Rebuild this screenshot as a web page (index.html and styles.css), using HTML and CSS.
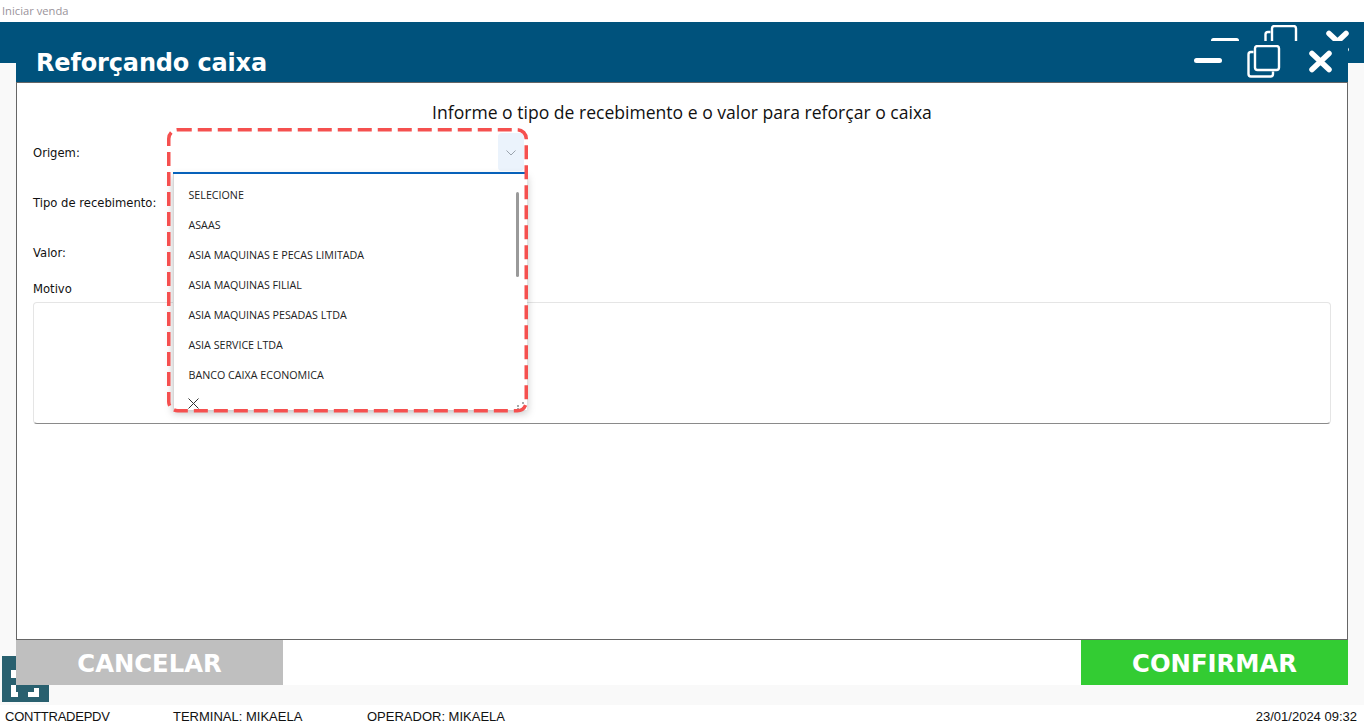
FILE: index.html
```html
<!DOCTYPE html>
<html lang="pt-BR">
<head>
    <meta charset="UTF-8">
    <meta name="viewport" content="width=device-width, initial-scale=1.0">
    <title>Reforçando caixa</title>
    <link rel="stylesheet" href="styles.css">
</head>
<body>
    <svg class="icon-defs" width="0" height="0">
        <symbol id="window-controls" viewBox="0 0 140 34">
            <rect x="0" y="13" width="28" height="5" rx="2.5" fill="#fff"/>
            <rect x="61" y="1" width="24" height="24" rx="2.5" fill="none" stroke="#fff" stroke-width="2.400"/>
            <path d="M59.500 7H57a2.500 2.500 0 0 0-2.500 2.500V29a2.500 2.500 0 0 0 2.500 2.500h19.500a2.500 2.500 0 0 0 2.500-2.500v-2.500" fill="none" stroke="#fff" stroke-width="2.400"/>
            <path d="M118 8.500l17 16M135 8.500l-17 16" fill="none" stroke="#fff" stroke-width="5.500" stroke-linecap="round"/>
        </symbol>
    </svg>

    <div class="top-strip">Iniciar venda</div>

    <main class="stage">
        <div class="app-bar">
            <svg class="window-controls"><use href="#window-controls"/></svg>
        </div>

        <button class="fullscreen-btn" type="button" aria-label="Tela cheia">
            <svg width="28" height="27" viewBox="0 0 28 27">
                <path d="M2.500 8V2.500H9M19 2.500h6.500V8M25.500 18v6.500H17M7 24.500H2.500V15" fill="none" stroke="#fff" stroke-width="5"/>
            </svg>
        </button>

        <section class="modal">
            <header class="modal-header">
                <h1>Reforçando caixa</h1>
                <svg class="window-controls"><use href="#window-controls"/></svg>
            </header>

            <div class="modal-body">
                <p class="message">Informe o tipo de recebimento e o valor para reforçar o caixa</p>

                <div class="form-row">
                    <label>Origem:</label>
                    <div class="combo">
                        <input type="text" class="combo-input">
                        <span class="combo-caret">
                            <svg width="10" height="6" viewBox="0 0 10 6">
                                <path d="M.5.500L5 5 9.500.500" fill="none" stroke="#9aa3ad" stroke-width="1"/>
                            </svg>
                        </span>

                        <div class="combo-panel">
                            <ul class="combo-list">
                                <li>SELECIONE</li>
                                <li>ASAAS</li>
                                <li>ASIA MAQUINAS E PECAS LIMITADA</li>
                                <li>ASIA MAQUINAS FILIAL</li>
                                <li>ASIA MAQUINAS PESADAS LTDA</li>
                                <li>ASIA SERVICE LTDA</li>
                                <li>BANCO CAIXA ECONOMICA</li>
                            </ul>
                            <svg class="combo-clear" width="11" height="11" viewBox="0 0 11 11">
                                <path d="M.5.500l10 10M10.500.500l-10 10" fill="none" stroke="#333" stroke-width="1"/>
                            </svg>
                            <span class="combo-scroll"></span>
                            <svg class="combo-grip" width="9" height="7" viewBox="0 0 9 7">
                                <path d="M1 3h2v2H1zM6 0h2v2H6zM6 5h2v2H6zM1 6h2v1H1z" fill="#a8a8a8"/>
                            </svg>
                        </div>

                        <svg class="highlight" width="361" height="285" viewBox="0 0 361 285">
                            <rect x="1.750" y="1.750" width="357.500" height="281" rx="9" fill="none" stroke="#f5504f" stroke-width="3.500" stroke-dasharray="14 6"/>
                        </svg>
                    </div>
                </div>

                <div class="form-row">
                    <label>Tipo de recebimento:</label>
                </div>

                <div class="form-row">
                    <label>Valor:</label>
                </div>

                <label class="motivo-label" for="motivo">Motivo</label>
                <textarea class="motivo" id="motivo"></textarea>
            </div>

            <footer class="modal-actions">
                <button class="btn btn-cancel" type="button">CANCELAR</button>
                <button class="btn btn-confirm" type="button">CONFIRMAR</button>
            </footer>
        </section>
    </main>

    <footer class="status-bar">
        <span class="status-host">CONTTRADEPDV</span>
        <span class="status-terminal">TERMINAL: MIKAELA</span>
        <span>OPERADOR: MIKAELA</span>
        <span class="status-date">23/01/2024 09:32</span>
    </footer>
</body>
</html>
```

FILE: styles.css
```css
* {
    box-sizing: border-box;
}

html, body {
    height: 100%;
    margin: 0;
    overflow: hidden;
}

body {
    display: flex;
    flex-direction: column;
    background: #fff;
    color: #111;
    font-family: "Open Sans", sans-serif;
}

.icon-defs {
    position: absolute;
}

.top-strip {
    height: 22px;
    padding: 3px 0 0 2px;
    color: #9a939a;
    font-size: 11.200px;
    line-height: 15px;
}

.stage {
    position: relative;
    flex: 1;
    background: #f9f9f9;
}

.app-bar {
    display: flex;
    justify-content: flex-end;
    height: 41px;
    padding: 3px 13px 0 0;
    overflow: hidden;
    background: #00527c;
}

.window-controls {
    flex: none;
    width: 140px;
    height: 34px;
}

.fullscreen-btn {
    position: absolute;
    left: 2px;
    top: 634px;
    width: 47px;
    height: 46px;
    padding: 9px 0 0 9px;
    border: 0;
    background: #29606f;
    text-align: left;
}

.fullscreen-btn svg {
    display: block;
}

.modal {
    position: absolute;
    left: 16px;
    right: 16px;
    top: 19px;
    bottom: 20px;
    display: flex;
    flex-direction: column;
}

.modal-header {
    display: flex;
    justify-content: space-between;
    flex: none;
    height: 41px;
    padding: 4px 14px 0 20px;
    background: #00527c;
}

.modal-header h1 {
    margin: 0;
    color: #fff;
    font-family: "DejaVu Sans", sans-serif;
    font-size: 24px;
    font-weight: 700;
    letter-spacing: -0.15px;
    line-height: 36px;
}

.modal-body {
    flex: 1;
    padding: 15px 16px 0;
    border: 1px solid #666;
    background: #fff;
}

.message {
    margin: 0 0 1px;
    color: #111;
    font-size: 17.570px;
    line-height: 28px;
    text-align: center;
}

.form-row {
    display: flex;
    height: 50px;
}

.form-row label,
.motivo-label {
    font-family: "DejaVu Sans", sans-serif;
    font-size: 11.600px;
}

.form-row label {
    flex: none;
    width: 140px;
    line-height: 52px;
}

.combo {
    position: relative;
    width: 354px;
    height: 41px;
    margin-top: 6px;
    border-bottom: 2px solid #0866c2;
}

.combo-input {
    display: block;
    width: 100%;
    height: 100%;
    border: 0;
    outline: 0;
    background: transparent;
}

.combo-caret {
    position: absolute;
    right: 3px;
    top: 0;
    display: flex;
    align-items: center;
    justify-content: center;
    width: 26px;
    height: 38px;
    padding-top: 2px;
    border-radius: 4px;
    background: #ebf3fc;
}

.combo-panel {
    position: absolute;
    left: 0;
    top: 41px;
    z-index: 2;
    width: 100%;
    height: 236px;
    padding-top: 6px;
    border-left: 1px solid #d8d8d8;
    background: #fff;
    box-shadow: 0 3px 8px rgba(0, 0, 0, 0.25);
}

.combo-list {
    margin: 0;
    padding: 0;
    list-style: none;
}

.combo-list li {
    height: 30px;
    padding-left: 14.500px;
    color: #222;
    font-size: 10.700px;
    line-height: 30px;
}

.combo-clear {
    display: block;
    margin: 8px 0 0 14px;
}

.combo-scroll {
    position: absolute;
    right: 8px;
    top: 18px;
    width: 3px;
    height: 85px;
    border-radius: 2px;
    background: #9a9a9a;
}

.combo-grip {
    position: absolute;
    right: 2px;
    bottom: 1px;
}

.highlight {
    position: absolute;
    left: -6px;
    top: -5px;
    z-index: 3;
    pointer-events: none;
}

.motivo-label {
    display: block;
    line-height: 24px;
}

.motivo {
    display: block;
    width: 100%;
    height: 122px;
    margin-top: 1px;
    border: 1px solid #e5e5e5;
    border-bottom-color: #8a8a8a;
    border-radius: 4px;
    outline: 0;
    resize: none;
}

.modal-actions {
    display: flex;
    justify-content: space-between;
    flex: none;
    height: 45px;
    background: #fff;
}

.btn {
    width: 267px;
    padding: 2px 0 0;
    border: 0;
    color: #fff;
    font-family: "DejaVu Sans", sans-serif;
    font-size: 24.300px;
    font-weight: 700;
}

.btn-cancel {
    background: #bfbfbf;
}

.btn-confirm {
    background: #33cc33;
}

.status-bar {
    display: flex;
    flex: none;
    height: 17px;
    padding: 3px 7px 0 5px;
    color: #111;
    font-family: "Liberation Sans", sans-serif;
    font-size: 13px;
    line-height: 18px;
}

.status-host {
    width: 168px;
    letter-spacing: -0.25px;
}

.status-terminal {
    width: 194px;
}

.status-date {
    margin-left: auto;
}
```
